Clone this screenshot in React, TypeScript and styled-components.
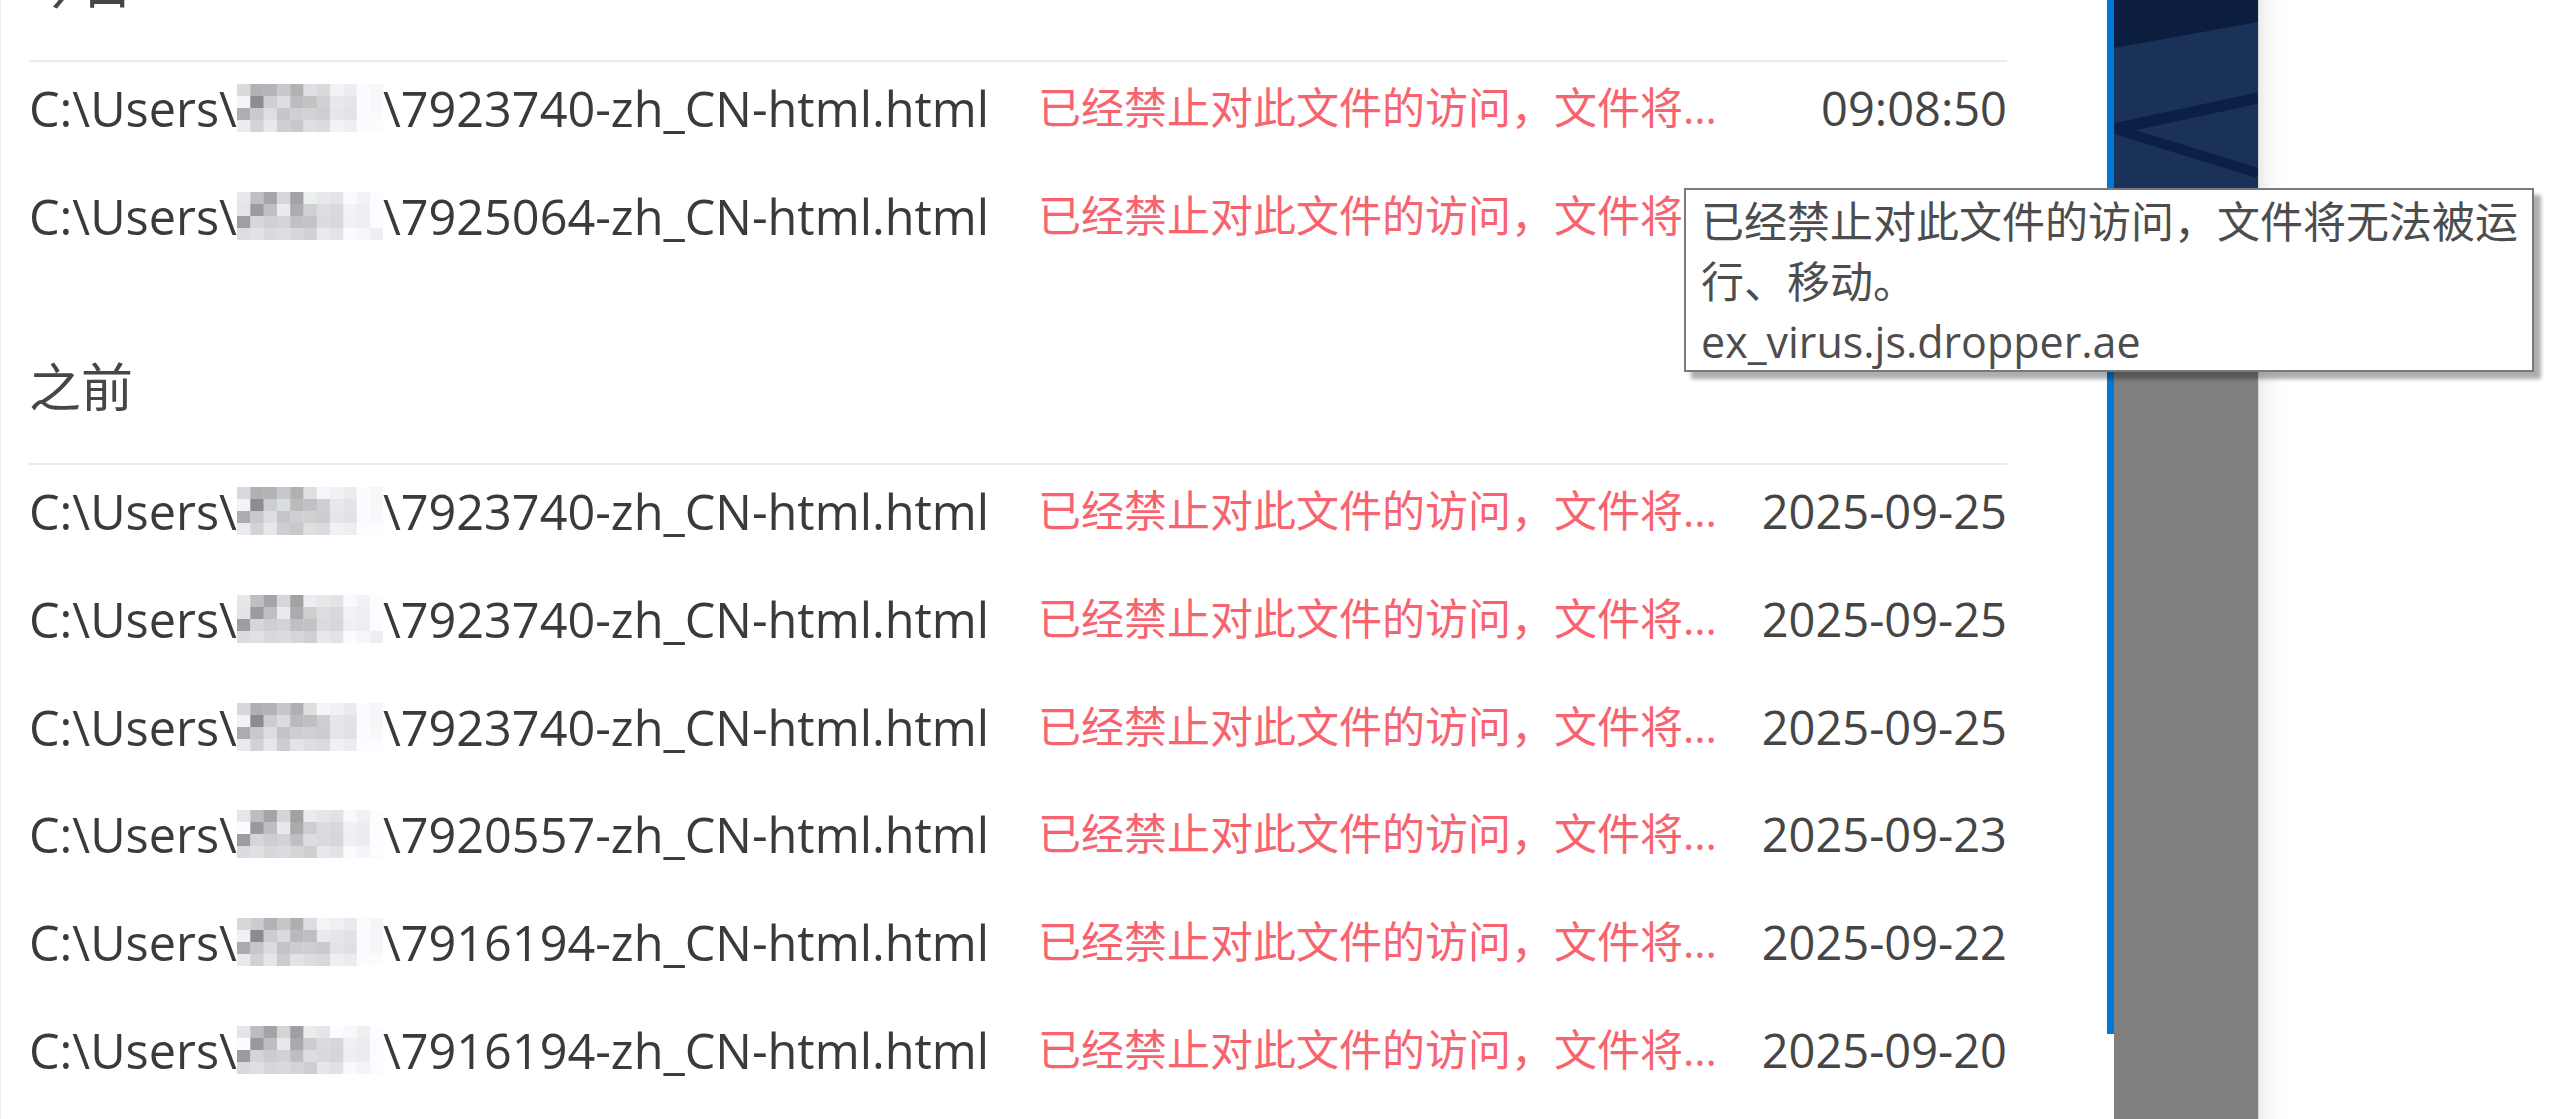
import React from "react";
import styled, { createGlobalStyle } from "styled-components";

const GlobalStyle = createGlobalStyle`
  html, body {
    margin: 0;
    padding: 0;
    background: #ffffff;
  }
  body {
    font-family: "Open Sans", "Noto Sans CJK SC", sans-serif;
    -webkit-font-smoothing: antialiased;
  }
  #root {
    height: 100vh;
  }
`;

const Page = styled.div`
  position: relative;
  display: flex;
  height: 100vh;
  overflow: hidden;
  background: #ffffff;
  border-left: 1px solid #ececec;
  box-sizing: border-box;
`;

const ListPane = styled.div`
  flex: none;
  width: 1978px;
  margin-left: 28px;
`;

const Scrolled = styled.div`
  margin-top: -126px;
`;

const SectionTitle = styled.h2`
  margin: 0;
  height: 188px;
  box-sizing: border-box;
  padding-top: 75px;
  border-bottom: 2px solid #ebebeb;
  font-family: "Noto Sans CJK SC", sans-serif;
  font-weight: 400;
  font-size: 52px;
  line-height: 66px;
  color: #464646;
`;

const Row = styled.div`
  display: grid;
  grid-template-columns: 1009px 700px 1fr;
  align-items: center;
  height: 107.7px;
  box-sizing: border-box;
  padding-bottom: 16px;
`;

const PathCell = styled.div`
  display: flex;
  align-items: center;
  white-space: nowrap;
  font-family: "Open Sans", sans-serif;
  font-size: 48.6px;
  line-height: 66px;
  color: #3a3a3a;
`;

const MessageCell = styled.div`
  white-space: nowrap;
  font-family: "Open Sans", "Noto Sans CJK SC", sans-serif;
  font-size: 43px;
  line-height: 66px;
  color: #f7646f;
`;

const DateCell = styled.div`
  text-align: right;
  white-space: nowrap;
  font-family: "Open Sans", sans-serif;
  font-size: 47px;
  line-height: 66px;
  color: #454545;
`;

const Tooltip = styled.div`
  position: absolute;
  left: 1683px;
  top: 188px;
  width: 850px;
  height: 184px;
  box-sizing: border-box;
  padding: 2px 12px 0 15px;
  border: 2px solid #7a7a7a;
  background: #ffffff;
  box-shadow: 7px 7px 4px rgba(0, 0, 0, 0.32);
  font-family: "Open Sans", "Noto Sans CJK SC", sans-serif;
  font-size: 43px;
  line-height: 60px;
  color: #4d4d4d;
  z-index: 2;
`;

const TooltipLine = styled.div`
  white-space: normal;
`;

const SidePreview = styled.div`
  flex: none;
  display: flex;
  height: 100%;
  margin-left: 100px;
`;

const AccentBar = styled.div`
  flex: none;
  align-self: flex-start;
  width: 7px;
  height: 1034px;
  background: #0078d7;
`;

const Thumb = styled.div`
  flex: none;
  display: flex;
  flex-direction: column;
  width: 144px;
  height: 100%;
  background: #808080;
`;

const EdgeShade = styled.div`
  flex: none;
  width: 26px;
  height: 100%;
  border-left: 1px solid #d8d8d8;
  background: linear-gradient(to right, #ececec, #f7f7f7 35%, #ffffff);
`;

const BASE: number[][] = [
  [218, 190, 176, 208, 168, 226, 232, 240, 246, 250, 252],
  [242, 152, 200, 226, 176, 194, 220, 228, 236, 244, 250],
  [170, 210, 214, 202, 194, 208, 216, 224, 232, 242, 250],
  [230, 218, 222, 208, 214, 220, 228, 234, 242, 248, 252],
];

function Mosaic({ seed }: { seed: number }) {
  const cells: React.ReactNode[] = [];
  BASE.forEach((row, r) => {
    row.forEach((v, c) => {
      const jitter = ((r * 31 + c * 17 + seed * 43) % 29) - 14;
      const g = Math.max(140, Math.min(252, v + jitter));
      const b = Math.min(255, g + ((c + r + seed) % 3 === 0 ? 6 : 1));
      cells.push(
        <rect
          key={`${r}-${c}`}
          x={c * 13.3}
          y={r * 12}
          width={13.6}
          height={12.3}
          fill={`rgb(${g - 2},${g},${b})`}
        />
      );
    });
  });
  return (
    <svg width="146" height="48" viewBox="0 0 146 48" style={{ flex: "none" }}>
      <defs>
        <filter id={`soft${seed}`} x="-5%" y="-5%" width="110%" height="110%">
          <feGaussianBlur stdDeviation="0.7" />
        </filter>
      </defs>
      <g filter={`url(#soft${seed})`}>{cells}</g>
    </svg>
  );
}

function Wallpaper() {
  return (
    <svg width="144" height="280" viewBox="0 0 144 280" style={{ display: "block", flex: "none" }}>
      <rect x="0" y="0" width="144" height="280" fill="#1a3257" />
      <polygon points="0,0 144,0 144,22 0,48" fill="#0b1e40" />
      <line x1="0" y1="129" x2="144" y2="98" stroke="#0c2045" strokeWidth="11" />
      <line x1="4" y1="130" x2="144" y2="173" stroke="#0c2045" strokeWidth="10" />
    </svg>
  );
}

type Entry = { id: string; date: string; seed: number };

const MESSAGE = "已经禁止对此文件的访问，文件将无法被运行、移动。";
const MESSAGE_SHORT = "已经禁止对此文件的访问，文件将...";

const sections: { title: string; entries: Entry[] }[] = [
  {
    title: "今日",
    entries: [
      { id: "7923740", date: "09:08:50", seed: 1 },
      { id: "7925064", date: "08:57:31", seed: 2 },
    ],
  },
  {
    title: "之前",
    entries: [
      { id: "7923740", date: "2025-09-25", seed: 3 },
      { id: "7923740", date: "2025-09-25", seed: 4 },
      { id: "7923740", date: "2025-09-25", seed: 5 },
      { id: "7920557", date: "2025-09-23", seed: 6 },
      { id: "7916194", date: "2025-09-22", seed: 7 },
      { id: "7916194", date: "2025-09-20", seed: 8 },
    ],
  },
];

export default function App() {
  return (
    <>
      <GlobalStyle />
      <Page>
        <ListPane>
          <Scrolled>
            {sections.map((s) => (
              <section key={s.title}>
                <SectionTitle>{s.title}</SectionTitle>
                {s.entries.map((e, i) => (
                  <Row key={`${s.title}-${i}`}>
                    <PathCell>
                      <span>C:\Users\</span>
                      <Mosaic seed={e.seed} />
                      <span>\{e.id}-zh_CN-html.html</span>
                    </PathCell>
                    <MessageCell title={MESSAGE}>{MESSAGE_SHORT}</MessageCell>
                    <DateCell>{e.date}</DateCell>
                  </Row>
                ))}
              </section>
            ))}
          </Scrolled>
        </ListPane>
        <SidePreview>
          <AccentBar />
          <Thumb>
            <Wallpaper />
          </Thumb>
          <EdgeShade />
        </SidePreview>
        <Tooltip>
          <TooltipLine>{MESSAGE}</TooltipLine>
          <TooltipLine>ex_virus.js.dropper.ae</TooltipLine>
        </Tooltip>
      </Page>
    </>
  );
}
